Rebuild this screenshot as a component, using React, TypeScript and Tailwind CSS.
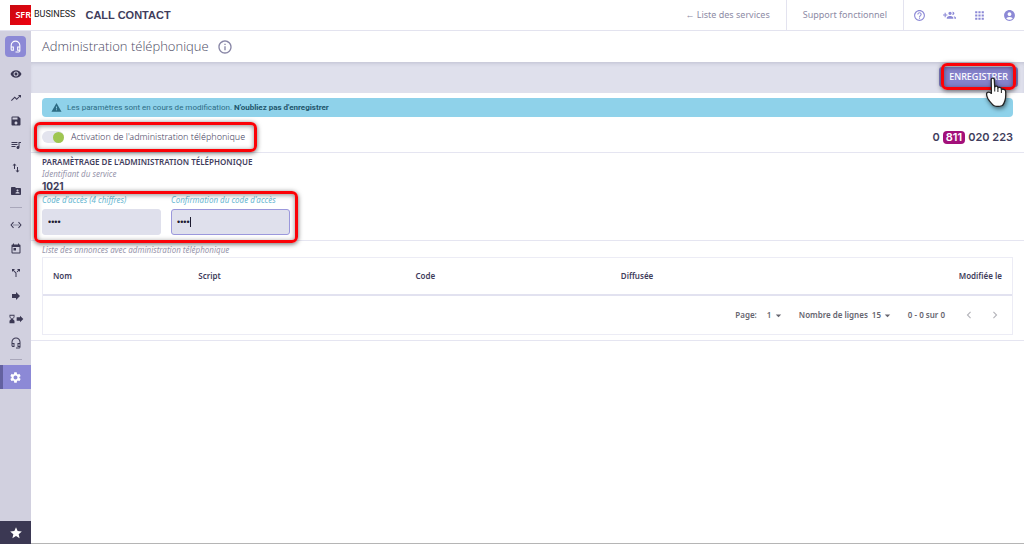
import { useState, type ReactNode } from "react";
import type { IconType } from "react-icons";
import {
  MdAccountCircle,
  MdApps,
  MdArrowDropDown,
  MdCallSplit,
  MdChevronLeft,
  MdChevronRight,
  MdFolderShared,
  MdForward,
  MdHelpOutline,
  MdHourglassBottom,
  MdImportExport,
  MdInfoOutline,
  MdOutlineHeadsetMic,
  MdQueueMusic,
  MdRemoveRedEye,
  MdSave,
  MdSettings,
  MdSettingsEthernet,
  MdStar,
  MdToday,
  MdTrendingUp,
  MdWarning,
} from "react-icons/md";

function Highlight({ className }: { className: string }) {
  return (
    <span
      aria-hidden="true"
      className={`pointer-events-none absolute rounded-md border-3 border-[#fb0207] shadow-[0_1px_5px_rgba(0,0,0,0.6),inset_0_1px_5px_rgba(0,0,0,0.45)] ${className}`}
    />
  );
}

function HandCursor() {
  return (
    <svg
      aria-hidden="true"
      viewBox="0 0 22 32"
      className="pointer-events-none absolute top-[9px] right-[11px] z-10 h-8 w-[22px] drop-shadow-[1px_2px_2px_rgba(0,0,0,0.5)]"
    >
      <path
        d="M6.2 3.5C6.2 1.6 9.2 1.6 9.3 3.5L9.7 11C10.2 9.8 12.8 10 12.9 11.4V12C13.6 11 16.2 11.3 16.4 12.8V13.6C17.6 12.8 20.4 13.2 20.6 15C20.9 18.5 20.8 22 20 24.5C19.4 26.5 18.8 28 17.5 29.5C14.5 30.6 11 30.6 8.5 29.5C7 27.8 4.3 25.5 2.8 22.5C1.8 20.3 1.2 18.2 1.8 17C3 15.6 5 16.2 6.4 17.4Z"
        fill="#fdfdfd"
        stroke="#222"
        strokeWidth="1.3"
        strokeLinejoin="round"
      />
      <path d="M9.7 11V15.5M12.9 12V16M16.4 13.6V17" stroke="#333" strokeWidth="1.1" />
    </svg>
  );
}

function GroupAddIcon() {
  return (
    <svg aria-hidden="true" viewBox="0 0 24 24" fill="currentColor" className="size-[13px]">
      <path d="M8 10H5V7H3v3H0v2h3v3h2v-3h3v-2zm10 1c1.66 0 2.99-1.34 2.99-3S19.66 5 18 5c-.32 0-.63.05-.91.14.57.81.9 1.79.9 2.86s-.34 2.04-.9 2.86c.28.09.59.14.91.14zm-5 0c1.66 0 2.99-1.34 2.99-3S14.66 5 13 5c-1.66 0-3 1.34-3 3s1.34 3 3 3zm6.62 2.16c.83.73 1.38 1.66 1.38 2.84v2h3v-2c0-1.54-2.37-2.49-4.38-2.84zM13 13c-2 0-6 1-6 3v2h12v-2c0-2-4-3-6-3z" />
    </svg>
  );
}

function NavItem({ icon: Icon, label }: { icon: IconType; label: string }) {
  return (
    <a
      href="#"
      aria-label={label}
      className="flex h-[23px] items-center justify-center text-[#3b3853]"
    >
      <Icon size={12} />
    </a>
  );
}

function Divider() {
  return <span className="mx-auto my-[5px] h-px w-3 bg-[#a9a7ba]" />;
}

function Sidebar() {
  return (
    <nav className="flex w-[31px] shrink-0 flex-col bg-[#d1d0df]">
      <a
        href="#"
        aria-label="Accueil"
        className="mx-[5px] mt-[5px] mb-1 flex h-[21px] items-center justify-center rounded-sm bg-[#8c89d6] text-white"
      >
        <MdOutlineHeadsetMic size={13} />
      </a>
      <div className="flex flex-col gap-px pt-px">
        <NavItem icon={MdRemoveRedEye} label="Supervision" />
        <NavItem icon={MdTrendingUp} label="Statistiques" />
      </div>
      <NavItem icon={MdSave} label="Enregistrements" />
      <div className="flex flex-col pt-px">
        <NavItem icon={MdQueueMusic} label="Annonces" />
        <NavItem icon={MdImportExport} label="Transferts" />
        <NavItem icon={MdFolderShared} label="Contacts" />
      </div>
      <Divider />
      <div className="flex flex-col gap-px">
        <NavItem icon={MdSettingsEthernet} label="Routage" />
        <NavItem icon={MdToday} label="Calendrier" />
        <NavItem icon={MdCallSplit} label="Distribution" />
      </div>
      <NavItem icon={MdForward} label="Renvoi" />
      <a
        href="#"
        aria-label="File d'attente"
        className="flex h-6 items-center justify-center text-[#3b3853]"
      >
        <MdHourglassBottom size={10} className="-mr-[2px]" />
        <MdForward size={10} />
      </a>
      <NavItem icon={MdOutlineHeadsetMic} label="Agents" />
      <Divider />
      <a
        href="#"
        aria-label="Paramètres"
        aria-current="page"
        className="flex h-6 items-center justify-center border-l-3 border-[#6361a0] bg-[#8c89d6] pr-[3px] text-white"
      >
        <MdSettings size={13} />
      </a>
      <a
        href="#"
        aria-label="Favoris"
        className="mt-auto flex h-[23px] items-center justify-center bg-[#3b3853] text-white"
      >
        <MdStar size={14} />
      </a>
    </nav>
  );
}

function Header() {
  return (
    <header className="flex h-[31px] items-stretch border-b border-[#e3e3ef]">
      <div className="flex flex-1 items-center pl-[10px]">
        <span className="flex h-5 w-[21px] items-center justify-end bg-linear-to-br from-[#c80a10] to-[#f00010] text-[9px] font-semibold text-white">
          SFR
        </span>
        <span className="ml-[3px] font-['Roboto'] text-[9px] text-[#222]">BUSINESS</span>
        <span className="ml-[10px] font-['Liberation_Sans'] text-[11px] font-bold text-[#3f3d5c]">
          CALL CONTACT
        </span>
      </div>
      <a href="#" className="flex items-center px-4 text-[9px] text-[#8d8ba5]">
        ← Liste des services
      </a>
      <a
        href="#"
        className="flex items-center border-x border-[#e3e3ef] px-4 text-[9px] text-[#8d8ba5]"
      >
        Support fonctionnel
      </a>
      <div className="flex items-center gap-[17px] pr-2 pl-[9px] text-[#8c89d6]">
        <button aria-label="Aide">
          <MdHelpOutline size={13} />
        </button>
        <button aria-label="Ajouter un groupe">
          <GroupAddIcon />
        </button>
        <button aria-label="Applications">
          <MdApps size={13} />
        </button>
        <button aria-label="Compte">
          <MdAccountCircle size={13} />
        </button>
      </div>
    </header>
  );
}

function CodeField({
  id,
  label,
  active,
  children,
}: {
  id: string;
  label: string;
  active?: boolean;
  children?: ReactNode;
}) {
  const [value, setValue] = useState("1234");
  return (
    <div className="w-[119px]">
      <label
        htmlFor={id}
        className="block h-4 text-[8px] leading-[14px] whitespace-nowrap text-[#6ab8d2] italic"
      >
        {label}
      </label>
      <div className="relative">
        <input
          id={id}
          type="password"
          maxLength={4}
          value={value}
          onChange={(e) => setValue(e.target.value)}
          className={`block h-[26px] w-full rounded-[3px] border bg-[#dfe0ec] px-[5px] font-['Liberation_Sans'] text-[9px] text-[#1d1b30] caret-transparent outline-none ${
            active ? "border-[#9b98dc]" : "border-[#dfe0ec]"
          }`}
        />
        {children}
      </div>
    </div>
  );
}

function PagerSelect({
  id,
  label,
  value,
  className,
  selectClassName,
}: {
  id: string;
  label: string;
  value: string;
  className: string;
  selectClassName: string;
}) {
  return (
    <div className={`flex items-center ${className}`}>
      <label htmlFor={id}>{label}</label>
      <span className="relative flex items-center">
        <select
          id={id}
          defaultValue={value}
          className={`appearance-none bg-transparent outline-none ${selectClassName}`}
        >
          <option>{value}</option>
        </select>
        <MdArrowDropDown
          aria-hidden="true"
          size={13}
          className="pointer-events-none absolute right-0"
        />
      </span>
    </div>
  );
}

export default function App() {
  const [enabled, setEnabled] = useState(true);
  return (
    <div className="flex min-h-screen flex-col bg-white font-['Noto_Sans',sans-serif] text-[#3f3d5c]">
      <Header />
      <div className="flex flex-1">
        <Sidebar />
        <main className="min-w-0 flex-1 border-b border-[#b5b5b5]">
          <div className="flex h-[31px] items-center gap-2 px-[11px]">
            <h1 className="font-['Open_Sans'] text-[13px] font-light text-[#4b4a63]">
              Administration téléphonique
            </h1>
            <MdInfoOutline size={16} className="text-[#8886a6]" />
          </div>
          <div className="flex h-[31px] items-start justify-end bg-[#dfe0ec] px-[6px] pt-[5px] shadow-[inset_0_3px_4px_-2px_rgba(60,60,100,0.2)]">
            <div className="relative">
              <button className="block h-5 rounded-[3px] bg-[#8582cb] px-[10px] text-[9px] font-medium text-white">
                ENREGISTRER
              </button>
              <Highlight className="-top-1 right-[2px] -bottom-[3px] left-[2px]" />
              <HandCursor />
            </div>
          </div>

          <div
            role="status"
            className="mx-[11px] mt-[5px] flex h-[19px] items-center rounded-sm bg-[#8fd2ea] px-[9px] font-['Roboto'] text-[8px] text-[#2d6c84]"
          >
            <MdWarning size={11} className="mr-[5px]" />
            <p>
              Les paramètres sont en cours de modification.{" "}
              <strong className="text-[#22566c]">N'oubliez pas d'enregistrer</strong>
            </p>
          </div>

          <section className="flex h-9 items-center justify-between border-b border-[#e5e5f1] px-[11px] pt-[5px]">
            <div className="relative pr-1">
              <label className="flex items-center gap-[7px] text-[9px] leading-[14px] font-light">
                <span className="flex h-3 w-[22px] items-center rounded-full bg-[#e3e4ee]">
                  <input
                    type="checkbox"
                    role="switch"
                    checked={enabled}
                    onChange={(e) => setEnabled(e.target.checked)}
                    className={`size-[11px] appearance-none rounded-full ${
                      enabled ? "ml-auto bg-[#9fc651]" : "bg-white"
                    }`}
                  />
                </span>
                Activation de l'administration téléphonique
              </label>
              <Highlight className="-inset-x-2 -inset-y-2" />
            </div>
            <p className="flex items-center gap-[3px] font-['Inter'] text-[11px] font-semibold">
              0
              <span className="rounded-sm bg-[#a3107a] px-[3px] leading-[13px] text-white">811</span>
              020 223
            </p>
          </section>

          <section className="h-[88px] border-b border-[#e5e5f1] px-[11px] pt-[3px]">
            <h2 className="text-[8px] leading-3 font-semibold">
              PARAMÈTRAGE DE L'ADMINISTRATION TÉLÉPHONIQUE
            </h2>
            <p className="text-[8px] leading-3 text-[#9896ac] italic">Identifiant du service</p>
            <p className="mb-px font-['Inter'] text-[10px] leading-3 font-bold">1021</p>
            <div className="relative flex w-fit gap-[10px]">
              <CodeField id="code" label="Code d'accès (4 chiffres)" />
              <CodeField id="confirm" label="Confirmation du code d'accès" active>
                <span className="absolute top-2 left-[19px] h-[10px] w-px bg-[#1d1b30]" />
              </CodeField>
              <Highlight className="-inset-x-2 -top-[2px] -bottom-2" />
            </div>
          </section>

          <section className="border-b border-[#e5e5f1] px-[11px] pt-[2px] pb-[5px]">
            <h3 className="text-[8px] leading-[14px] text-[#9896ac] italic">
              Liste des annonces avec administration téléphonique
            </h3>
            <div className="border border-[#ececf5]">
              <table className="w-full table-fixed text-left text-[8px]">
                <thead>
                  <tr className="h-[37px] border-b-2 border-[#e2e2f0]">
                    <th className="w-[15%] px-[10px] font-semibold">Nom</th>
                    <th className="w-[22.4%] px-[10px] font-semibold">Script</th>
                    <th className="w-[21.2%] px-[10px] font-semibold">Code</th>
                    <th className="px-[10px] font-semibold">Diffusée</th>
                    <th className="px-[10px] text-right font-semibold">Modifiée le</th>
                  </tr>
                </thead>
              </table>
              <div className="flex h-[38px] items-center justify-end gap-[14px] pr-[10px] text-[8px] font-semibold text-[#66656f]">
                <PagerSelect
                  id="page"
                  label="Page:"
                  value="1"
                  className="gap-[10px]"
                  selectClassName="w-[18px]"
                />
                <PagerSelect
                  id="rows"
                  label="Nombre de lignes"
                  value="15"
                  className="gap-1"
                  selectClassName="w-[22px]"
                />
                <span>0 - 0 sur 0</span>
                <div className="flex gap-3 pl-[3px] text-[#b5b5bb]">
                  <button aria-label="Page précédente">
                    <MdChevronLeft size={14} />
                  </button>
                  <button aria-label="Page suivante">
                    <MdChevronRight size={14} />
                  </button>
                </div>
              </div>
            </div>
          </section>
        </main>
      </div>
    </div>
  );
}
